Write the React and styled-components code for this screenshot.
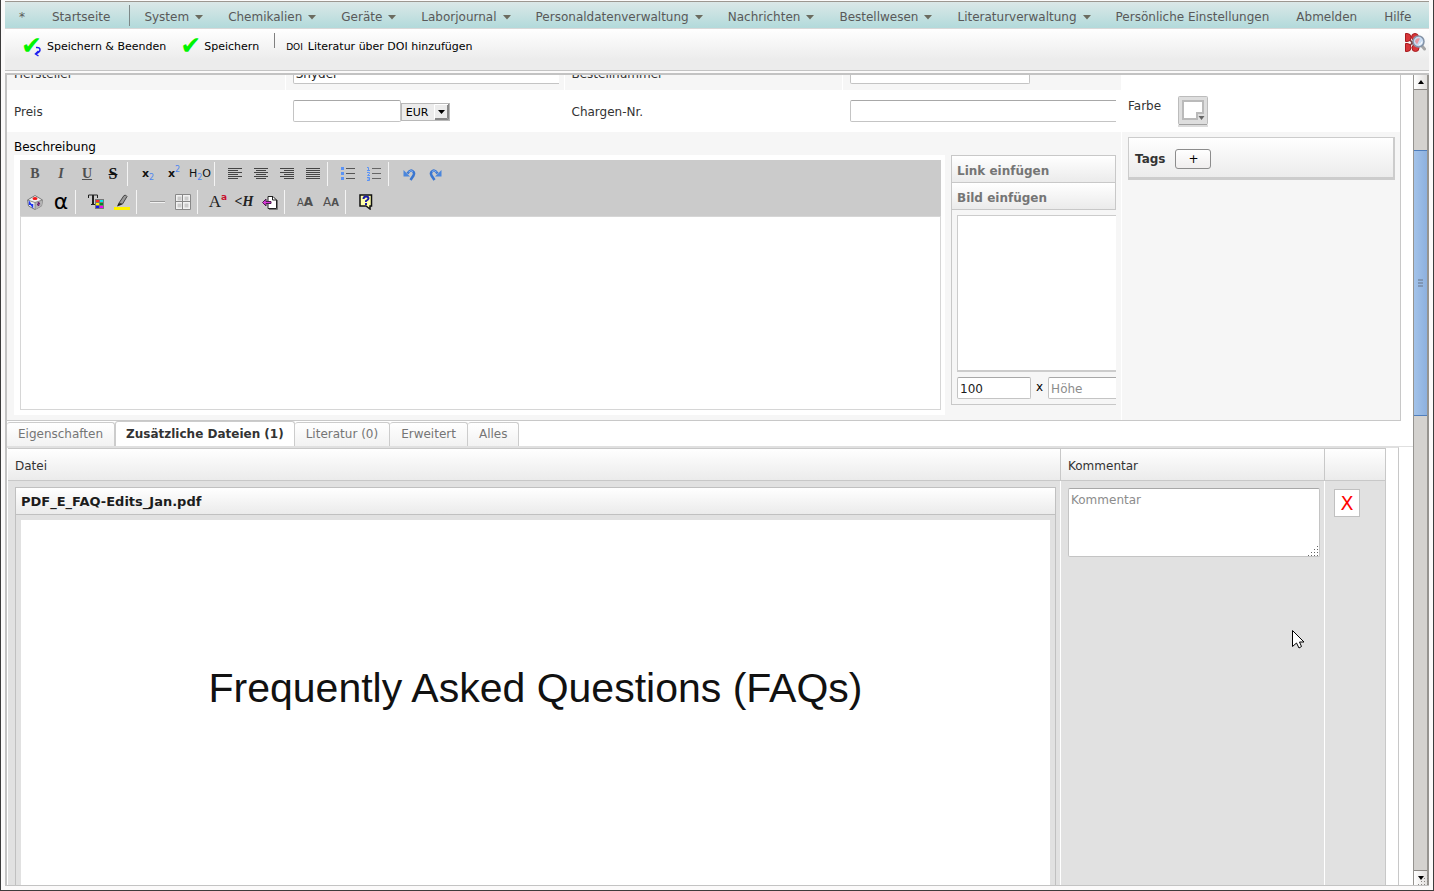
import { useState } from 'react';
import styled, { createGlobalStyle, css } from 'styled-components';

const GlobalStyle = createGlobalStyle`
    * {
        box-sizing: border-box;
    }

    body {
        margin: 0;
        font-family: 'DejaVu Sans', sans-serif;
        font-size: 12px;
        color: #333333;
        background: #fbfafa;
    }

    button, input, select, textarea {
        font-family: inherit;
        font-size: 12px;
    }
`;

const panelGradient = 'linear-gradient(#ffffff, #ebebeb)';

const Window = styled.div`
    position: relative;
    display: flex;
    flex-direction: column;
    height: 100vh;
    padding: 0 4px;
    overflow: hidden;
    border: solid #3c3c3c;
    border-width: 0 1px 1px 1px;
    background: #fbfafa;
`;

const NavBar = styled.nav`
    display: flex;
    flex: none;
    height: 28px;
    margin-top: 1px;
    padding-top: 1px;
    align-items: center;
    border-top: 1px solid #9c9790;
    border-bottom: 1px solid #d8d8d8;
    background: linear-gradient(#dbe8e8, #b2dadb);
`;

const NavItem = styled.a`
    display: flex;
    align-items: center;
    padding: 2px ${({ $menu }) => ($menu ? 11 : 13)}px 0 14px;
    line-height: 16px;
    white-space: nowrap;
    text-decoration: none;
    color: #595959;
`;

const NavArrow = styled.svg`
    margin: 2px 0 0 6px;
`;

const NavSeparator = styled.span`
    width: 1px;
    height: 21px;
    margin-left: 6px;
    background: #7d8888;
`;

const ActionBar = styled.div`
    display: flex;
    flex: none;
    height: 42px;
    padding: 4px 3px 0 17px;
    align-items: flex-start;
    border-bottom: 1px solid #c4c4c4;
    background: linear-gradient(#ffffff, #ececec 75%);
`;

const ActionButton = styled.button`
    display: flex;
    height: 26px;
    align-items: center;
    gap: 5px;
    margin-right: 15px;
    padding: 0;
    border: none;
    background: none;
    font-size: 11px;
    color: #000000;
`;

const CheckMark = styled.span`
    position: relative;
    width: ${({ $wide }) => ($wide ? 20 : 18)}px;
    font-size: 25px;
    line-height: 24px;
    text-indent: -1px;
    color: #00f400;

    svg {
        position: absolute;
        right: 0;
        bottom: 1px;
    }
`;

const DoiMark = styled.span`
    margin-top: 2px;
    font-size: 9px;
    line-height: 12px;
`;

const ActionSeparator = styled.span`
    width: 1px;
    height: 15px;
    margin-right: 11px;
    background: #808080;
`;

const SearchButton = styled.button`
    margin-left: auto;
    padding: 0;
    border: none;
    background: none;
`;

const Body = styled.div`
    display: flex;
    flex: 1;
    min-height: 0;
    margin-top: 2px;
    margin-bottom: 4px;
    border: solid #c3c3c3;
    border-width: 2px 0 1px 2px;
`;

const ScrollArea = styled.main`
    flex: 1;
    min-width: 0;
    overflow: hidden;
    background: #ffffff;
`;

const ScrollContent = styled.div`
    margin-top: -24px;
`;

const FormGrid = styled.div`
    display: grid;
    grid-template-columns: repeat(4, minmax(0, 1fr)) 278px;
    margin-right: 12px;
    border-right: 1px solid #c8c8c8;
    border-bottom: 1px solid #c8c8c8;
`;

const Cell = styled.div`
    display: flex;
    align-items: center;
    min-width: 0;
    padding: ${({ $shaded }) => ($shaded ? '11px 5px 6px 7px' : '10px 5px 10px 7px')};
    background: ${({ $shaded }) => ($shaded ? '#f6f6f6' : '#ffffff')};
    border-right: 1px solid #ffffff;
`;

const FieldLabel = styled.label`
    padding-top: 2px;
    line-height: 16px;
`;

const Clip = styled.div`
    display: flex;
    flex: 1;
    min-width: 0;
    align-items: center;
    overflow: hidden;
`;

const inputStyle = css`
    border: 1px solid #c4c4c4;
    border-top-color: #a8a8a8;
    border-radius: 2px;
    background: #ffffff;
    color: #1c1c1c;

    &::placeholder {
        color: #8c8c8c;
    }
`;

const TextInput = styled.input`
    ${inputStyle}
    flex: none;
    width: ${({ $width }) => $width};
    height: 22px;
    padding: 2px 2px 0;
`;

const SelectWrap = styled.div`
    position: relative;
    display: flex;
    padding-top: 2px;

    svg {
        position: absolute;
        top: 3px;
        right: 1px;
        pointer-events: none;
    }
`;

const Select = styled.select`
    appearance: none;
    width: 49px;
    height: 18px;
    padding: 0 4px;
    border: 1px solid #b8b8b8;
    border-radius: 0;
    background: #ececec;
    font-size: 11px;
    color: #000000;
`;

const ColorCell = styled(Cell)`
    align-items: flex-start;
    gap: 17px;
    padding: 5px 6px 0;
    border: none;
    line-height: 22px;
`;

const ColorButton = styled.button`
    height: 32px;
    padding: 0;
    border: none;
    background: none;
`;

const DescriptionCell = styled.section`
    grid-column: span 4;
    min-width: 0;
    padding: 7px 5px 5px 7px;
    border-right: 1px solid #ffffff;
    background: #f6f6f6;
`;

const DescriptionTitle = styled.div`
    line-height: 16px;
    color: #000000;
`;

const DescriptionRow = styled.div`
    display: flex;
    align-items: flex-start;
    gap: 6px;
`;

const Editor = styled.div`
    flex: 1;
    min-width: 0;
    padding: 5px 4px 5px 6px;
    background: #ffffff;
`;

const EditorToolbar = styled.div`
    padding: 0 2px;
    background: #cbcbcb;
`;

const ToolRow = styled.div`
    display: flex;
    height: 28px;
    align-items: center;
`;

const ToolSeparator = styled.span`
    width: 1px;
    height: 24px;
    margin: 0 7px 0 1px;
    background: #f4f4f4;
`;

const ToolButton = styled.button`
    display: flex;
    flex: none;
    width: 26px;
    height: 24px;
    align-items: center;
    justify-content: center;
    padding: 0;
    border: none;
    background: none;
`;

const Glyph = styled.span`
    font-family: ${({ $sans }) => ($sans ? "'DejaVu Sans', sans-serif" : "'Liberation Serif', serif")};
    font-size: ${({ $size }) => $size || 14}px;
    font-weight: ${({ $bold }) => ($bold ? 700 : 400)};
    font-style: ${({ $italic }) => ($italic ? 'italic' : 'normal')};
    text-decoration: ${({ $line }) => $line || 'none'};
    line-height: 18px;
    white-space: nowrap;
    color: ${({ $color }) => $color || '#505050'};

    sub, sup {
        font-family: 'DejaVu Sans', sans-serif;
        font-size: 8px;
        font-weight: 400;
        line-height: 0;
        color: #4d86f0;
    }
`;

const RedSup = styled.sup`
    && {
        font-size: 9px;
        font-weight: 700;
        color: #c8102e;
    }
`;

const EditorText = styled.textarea`
    display: block;
    width: 100%;
    height: 194px;
    resize: none;
    border: 1px solid #d6d6d6;
    border-radius: 0;
    outline: none;
    background: #ffffff;
`;

const InsertPanel = styled.aside`
    width: 165px;
    flex: none;
    overflow: hidden;
    border: solid #c8c8c8;
    border-width: 1px 0 1px 1px;
`;

const InsertButton = styled.button`
    display: block;
    width: 100%;
    height: 27px;
    padding: 3px 5px 0;
    border: solid #c8c8c8;
    border-width: 0 1px 1px 0;
    background: ${panelGradient};
    font-weight: 700;
    text-align: left;
    color: #757575;
`;

const ImageBox = styled.div`
    height: 157px;
    margin: 5px 0 5px 5px;
    border: solid #cccccc;
    border-width: 1px 0 2px 1px;
    background: #ffffff;
`;

const SizeRow = styled.div`
    display: flex;
    gap: 5px;
    padding: 0 0 5px 5px;
    line-height: 20px;
    color: #000000;
`;

const TagCell = styled.div`
    padding: 5px 5px 0 6px;
    background: #f6f6f6;
`;

const TagBox = styled.div`
    display: flex;
    height: 43px;
    padding: 2px 0 0 6px;
    align-items: center;
    gap: 10px;
    border: solid #cccccc;
    border-width: 1px 2px 3px 1px;
    background: ${panelGradient};
    font-weight: 700;
`;

const AddButton = styled.button`
    width: 36px;
    height: 20px;
    padding: 0;
    border: 1px solid #8c8c8c;
    border-radius: 3px;
    background: linear-gradient(#ffffff, #f0eeee);
    color: #000000;
`;

const TabBar = styled.div`
    display: flex;
    height: 25px;
    align-items: flex-end;
`;

const Tab = styled.button`
    height: ${({ $active }) => ($active ? 25 : 24)}px;
    padding: 0 ${({ $active }) => ($active ? 10 : 11)}px 1px;
    border: 1px solid #cccccc;
    border-left-width: ${({ $active }) => ($active ? 1 : 0)}px;
    border-bottom: none;
    border-radius: 3px 3px 0 0;
    background: ${({ $active }) => ($active ? '#ffffff' : 'linear-gradient(#ffffff, #f2f2f2)')};
    font-weight: ${({ $active }) => ($active ? 700 : 400)};
    color: ${({ $active }) => ($active ? '#333333' : '#757575')};
`;

const FileSection = styled.section`
    border-top: 1px solid #e0e0e0;
`;

const FilePanel = styled.div`
    margin-right: 14px;
    padding: 0 12px 0 1px;
    border-top: 1px solid #e0e0e0;
    border-right: 1px solid #c8c8c8;
`;

const FileTable = styled.table`
    width: 100%;
    table-layout: fixed;
    border-collapse: separate;
    border-spacing: 0;
    border-right: 1px solid #c8c8c8;
    background: #e1e1e1;
`;

const HeadCell = styled.th`
    width: ${({ $width }) => $width || 'auto'};
    height: 33px;
    padding: 2px 7px 0;
    border: solid #c8c8c8;
    border-width: 1px 1px 1px 0;
    background: ${panelGradient};
    font-weight: 400;
    text-align: left;

    &:last-child {
        border-right: none;
    }
`;

const DataCell = styled.td`
    height: 500px;
    padding: 6px 4px 0 7px;
    vertical-align: top;
    border-right: 1px solid #ffffff;

    &:last-child {
        border-right: none;
    }
`;

const FileBox = styled.div`
    height: 100%;
    border: 1px solid #c0c0c0;
`;

const FileName = styled.div`
    height: 27px;
    padding: 1px 5px 0;
    line-height: 26px;
    border-bottom: 1px solid #c0c0c0;
    background: ${panelGradient};
    font-size: 13px;
    font-weight: 700;
    color: #1c1c1c;
`;

const Preview = styled.div`
    height: 460px;
    margin: 5px 5px 0;
    padding-top: 144px;
    background: #ffffff;
    font-family: 'Liberation Sans', sans-serif;
    font-size: 41px;
    line-height: 48px;
    text-align: center;
    white-space: nowrap;
    color: #111111;
`;

const CommentWrap = styled.div`
    position: relative;

    svg {
        position: absolute;
        right: 1px;
        bottom: 1px;
    }
`;

const CommentArea = styled.textarea`
    ${inputStyle}
    display: block;
    width: 100%;
    height: 69px;
    margin-top: 1px;
    padding: 4px 2px;
    resize: none;
`;

const DeleteButton = styled.button`
    width: 26px;
    height: 28px;
    margin: 2px;
    padding: 0;
    border: 1px solid #c0c0c0;
    background: #ffffff;
    font-size: 19px;
    line-height: 24px;
    color: #ff0000;
`;

const ScrollBar = styled.div`
    display: flex;
    flex: none;
    flex-direction: column;
    width: 16px;
    border: solid #969490;
    border-width: 0 2px 0 1px;
    background: #d4d2cf;
`;

const ScrollButton = styled.button`
    display: flex;
    height: 15px;
    align-items: center;
    justify-content: center;
    padding: 0;
    border: solid #8a8783;
    border-width: ${({ $down }) => ($down ? '1px 0 0' : '0 0 1px')};
    background: linear-gradient(90deg, #ffffff, #e2e0de);
`;

const ScrollTrack = styled.div`
    flex: 1;
    padding-top: 60px;
`;

const ScrollThumb = styled.div`
    display: flex;
    height: 37%;
    align-items: center;
    justify-content: center;
    border: solid #4f7ebc;
    border-width: 1px 0;
    background: linear-gradient(90deg, #a3c3ea, #8db0de);
`;

const ResizeGrip = styled.svg`
    position: absolute;
    right: 4px;
    bottom: 5px;
`;

const Pointer = styled.svg`
    position: absolute;
    left: 1291px;
    top: 629px;
    pointer-events: none;
`;

const navItems = [
    { label: 'System', menu: true },
    { label: 'Chemikalien', menu: true },
    { label: 'Geräte', menu: true },
    { label: 'Laborjournal', menu: true },
    { label: 'Personaldatenverwaltung', menu: true },
    { label: 'Nachrichten', menu: true },
    { label: 'Bestellwesen', menu: true },
    { label: 'Literaturverwaltung', menu: true },
    { label: 'Persönliche Einstellungen' },
    { label: 'Abmelden' },
    { label: 'Hilfe' },
];

const tabs = ['Eigenschaften', 'Zusätzliche Dateien (1)', 'Literatur (0)', 'Erweitert', 'Alles'];

const CheckIcon = ({ arrow }) => (
    <CheckMark $wide={arrow} aria-hidden="true">
        ✔
        {arrow && (
            <svg width="8" height="11" viewBox="0 0 8 11">
                <path d="M2 1.500q4-.5 4 2.500q0 2-3.500 3.500M4.500 5L1.500 8l3 2" fill="none" stroke="#1d1df0" strokeWidth="1.500" />
            </svg>
        )}
    </CheckMark>
);

const MoleculeIcon = () => (
    <svg width="21" height="20" viewBox="0 0 21 20">
        <path d="M3 4l8 11M12 4L3 15" stroke="#7d3c3c" strokeWidth="1.500" />
        <g fill="#d8363a" stroke="#a81c20">
            <path d="M.5.500h1.500a3.500 3.500 0 0 1 0 8H.500zM.5 10.500h1.500a4 4 0 0 1 0 8H.500z" />
            <circle cx="10" cy="4" r="3.500" />
            <circle cx="10.500" cy="15" r="3.500" />
        </g>
        <path d="M17 13l2.500 3" stroke="#a5a5a5" strokeWidth="3" strokeLinecap="round" />
        <circle cx="13.500" cy="8.500" r="5.500" fill="#c9dcf2" stroke="#8493a6" strokeWidth="1.500" />
        <path d="M10 8.500a3.500 3.500 0 0 1 5-3l-3 6z" fill="#e79aa2" />
        <path d="M14 11.500a3 3 0 0 0 3-3" stroke="#ffffff" fill="none" />
    </svg>
);

const SwatchIcon = () => (
    <svg width="30" height="32" viewBox="0 0 30 32">
        <path d="M0 31h30" stroke="#dcdcdc" strokeWidth="2" />
        <rect x=".5" y="1.500" width="29" height="28" rx="1" fill="#dedede" stroke="#bcbcbc" />
        <path d="M1 29.500h28" stroke="#a0a0a0" />
        <path d="M5 6h20v12h-6v6H5z" fill="#ffffff" stroke="#bababa" strokeWidth="2" />
        <path d="M20.500 21h6l-3 4z" fill="#666666" />
    </svg>
);

// one hairline every second pixel, short lines alternate with full ones
const AlignIcon = ({ align }) => (
    <svg width="14" height="12" viewBox="0 0 14 12" fill="#444444">
        {[0, 1, 2, 3, 4, 5].map((row) => {
            const width = align === 'justify' || row % 2 === 0 ? 14 : 10;
            const x = { left: 0, justify: 0, center: (14 - width) / 2, right: 14 - width }[align];
            return <rect key={row} x={x} y={row * 2} width={width} height="1" />;
        })}
    </svg>
);

const BulletIcon = () => (
    <svg width="14" height="14" viewBox="0 0 14 14">
        <path d="M0 0h3v3H0zM0 5h3v3H0zM0 10h3v3H0z" fill="#5b93f5" />
        <path d="M5 1.500h9M5 6.500h9M5 11.500h9" stroke="#555555" />
    </svg>
);

const NumberIcon = () => (
    <svg width="14" height="14" viewBox="0 0 14 14">
        <path d="M0 .5h1.500v3M0 3.500h3M0 5.500h2.500v1L.500 8.500h2.500M0 10.500h2.500v3H0M.5 12h2" fill="none" stroke="#5b93f5" />
        <path d="M5 1.500h9M5 6.500h9M5 11.500h9" stroke="#666666" />
    </svg>
);

const UndoIcon = ({ redo }) => (
    <svg width="13" height="13" viewBox="0 0 13 13">
        <g transform={redo ? 'translate(13 0) scale(-1 1)' : undefined}>
            <path d="M4.500 5.500Q7 1.500 9.500 3T10.500 7.500L7.500 12" fill="none" stroke="#3a76d0" strokeWidth="2.500" />
            <path d="M5.500 4Q8 1.500 10 3.500" fill="none" stroke="#86b0f0" />
            <path d="M.5 2v6.500H7z" fill="#4a86dc" />
        </g>
    </svg>
);

const CubeIcon = () => (
    <svg width="16" height="15" viewBox="0 0 16 15">
        <path d="M.5 5L8 .5 15.500 5l-1 6L8 14.500 1.500 11z" fill="#f0f0f0" stroke="#777777" />
        <path d="M8 7.500l7.500-2.500-1 6L8 14.500z" fill="#b4b4b4" />
        <path d="M.5 5L8 7.500 15.500 5M8 7.500v7" fill="none" stroke="#888888" />
        <ellipse cx="8" cy="3.500" rx="2.500" ry="1.500" fill="#f01818" />
        <path d="M2.500 10V7.500l3 4V9" fill="none" stroke="#1d35f0" strokeWidth="1.500" />
        <path d="M10 9.500l3-1M11.500 7v4" stroke="#6c2173" strokeWidth="1.500" />
    </svg>
);

const TextColorIcon = () => (
    <svg width="16" height="16" viewBox="0 0 16 16">
        <path d="M.5 4V1h9v3M3 10.500h4" fill="none" stroke="#222222" />
        <path d="M5 1v9" stroke="#222222" strokeWidth="2" />
        <path d="M7 5h9v10H7z" fill="#777777" />
        <path d="M8 6h3v2H8z" fill="#ff2a2a" />
        <path d="M12 6h3v2h-3z" fill="#00e8e8" />
        <path d="M8 9h3v2H8z" fill="#ffee00" />
        <path d="M12 9h3v2h-3z" fill="#008a20" />
        <path d="M8 12h3v2H8z" fill="#1414f0" />
        <path d="M12 12h3v2h-3z" fill="#f000f0" />
    </svg>
);

const MarkerIcon = () => (
    <svg width="16" height="16" viewBox="0 0 16 16">
        <path d="M5 9l5-7.500q2-1 3 1L8.500 10z" fill="#999999" stroke="#444444" />
        <path d="M4.500 9l4 1.500-5.500 2z" fill="#222222" />
        <path d="M0 13h16v3H0z" fill="#fff200" />
    </svg>
);

const RuleIcon = () => (
    <svg width="15" height="3" viewBox="0 0 15 3">
        <path d="M0 .5h15" stroke="#999999" />
        <path d="M0 1.500h15" stroke="#f2f2f2" />
    </svg>
);

const TableIcon = () => (
    <svg width="16" height="16" viewBox="0 0 16 16">
        <path d="M.5.500h15v15H.500z" fill="#f2f2f2" stroke="#888888" />
        <path d="M2.500 2.500h4v4h-4zM9.500 2.500h4v4h-4zM2.500 9.500h4v4h-4zM9.500 9.500h4v4h-4z" fill="#cbcbcb" />
        <path d="M7.500 1v14M1 7.500h14" stroke="#888888" />
    </svg>
);

const PageIcon = () => (
    <svg width="16" height="15" viewBox="0 0 16 15">
        <path d="M6 1.500h5l3.500 3.500v8.500H6z" fill="#ffffff" stroke="#222222" />
        <path d="M15.500 5v9.500H7" fill="none" stroke="#777777" />
        <path d="M10.500 1.500V5h4" fill="none" stroke="#222222" />
        <path d="M.5 7.500l3.500-3.500v2.500h5v2H4V11z" fill="#d839d8" stroke="#4b1a4b" />
    </svg>
);

const HelpIcon = () => (
    <svg width="14" height="16" viewBox="0 0 14 16">
        <path d="M1 1h11.500v11H11v3l-4-3H1z" fill="#ffffa8" stroke="#111111" strokeWidth="1.500" />
        <path d="M4.500 5q0-2.500 2.500-2.500t2.500 2q0 1-2.500 2.500v1M7 9v2" fill="none" stroke="#1a1aa8" strokeWidth="2" />
    </svg>
);

const CursorIcon = () => (
    <Pointer width="14" height="22" viewBox="0 0 14 22">
        <path d="M1.500 1.500v16l4-3.500 2.500 5 2.500-1.500-2-4.500h4.500z" fill="#ffffff" stroke="#000000" />
    </Pointer>
);

const gripPath =
    'M10 1h1v1h-1zM10 4h1v1h-1zM10 7h1v1h-1zM10 10h1v1h-1zM7 4h1v1H7zM7 7h1v1H7zM7 10h1v1H7zM4 7h1v1H4zM4 10h1v1H4zM1 10h1v1H1z';

const GripDots = () => (
    <svg width="12" height="11" viewBox="0 0 12 11" fill="#666666">
        <path d={gripPath} />
    </svg>
);

const toolRows = [
    [
        [
            ['Fett', <Glyph $bold>B</Glyph>],
            ['Kursiv', <Glyph $bold $italic>I</Glyph>],
            ['Unterstrichen', <Glyph $bold $line="underline">U</Glyph>],
            ['Durchgestrichen', <Glyph $bold $size={16} $line="line-through" $color="#111111">S</Glyph>],
        ],
        [
            ['Tiefgestellt', <Glyph $sans $bold $size={11} $color="#111111">x<sub>2</sub></Glyph>],
            ['Hochgestellt', <Glyph $sans $bold $size={11} $color="#111111">x<sup>2</sup></Glyph>],
            ['Formel', <Glyph $sans $size={11} $color="#111111">H<sub>2</sub>O</Glyph>],
        ],
        [
            ['Linksbündig', <AlignIcon align="left" />],
            ['Zentriert', <AlignIcon align="center" />],
            ['Rechtsbündig', <AlignIcon align="right" />],
            ['Blocksatz', <AlignIcon align="justify" />],
        ],
        [
            ['Aufzählung', <BulletIcon />],
            ['Nummerierung', <NumberIcon />],
        ],
        [
            ['Rückgängig', <UndoIcon />],
            ['Wiederholen', <UndoIcon redo />],
        ],
    ],
    [
        [
            ['Objekt', <CubeIcon />],
            ['Sonderzeichen', <Glyph $sans $size={22} $color="#000000">α</Glyph>],
        ],
        [
            ['Textfarbe', <TextColorIcon />],
            ['Hervorheben', <MarkerIcon />],
        ],
        [
            ['Linie', <RuleIcon />],
            ['Tabelle', <TableIcon />],
        ],
        [
            ['Schriftart', <Glyph $size={17} $color="#222222">A<RedSup>a</RedSup></Glyph>],
            ['Überschrift', <Glyph $bold $italic $color="#222222">&lt;H</Glyph>],
            ['Seite einfügen', <PageIcon />],
        ],
        [
            ['Größer', <Glyph $sans $size={10}>A<Glyph $sans $bold $size={12}>A</Glyph></Glyph>],
            ['Kleiner', <Glyph $sans $size={12}>A<Glyph $sans $bold $size={10}>A</Glyph></Glyph>],
        ],
        [['Hilfe', <HelpIcon />]],
    ],
];

const ToolGroup = ({ tools, first }) => (
    <>
        {!first && <ToolSeparator />}
        {tools.map(([label, icon]) => (
            <ToolButton key={label} type="button" aria-label={label}>
                {icon}
            </ToolButton>
        ))}
    </>
);

const Navigation = () => (
    <NavBar>
        <NavItem href="#">*</NavItem>
        <NavItem href="#">Startseite</NavItem>
        <NavSeparator />
        {navItems.map(({ label, menu }) => (
            <NavItem key={label} href="#" $menu={menu}>
                {label}
                {menu && (
                    <NavArrow width="8" height="5" viewBox="0 0 8 5">
                        <path d="M0 0h8L4 4.500z" fill="#6b6b5f" />
                    </NavArrow>
                )}
            </NavItem>
        ))}
    </NavBar>
);

const Description = () => (
    <DescriptionCell>
        <DescriptionTitle>Beschreibung</DescriptionTitle>
        <DescriptionRow>
            <Editor>
                <EditorToolbar>
                    {toolRows.map((groups, row) => (
                        <ToolRow key={row}>
                            {groups.map((tools, idx) => (
                                <ToolGroup key={idx} tools={tools} first={idx === 0} />
                            ))}
                        </ToolRow>
                    ))}
                </EditorToolbar>
                <EditorText aria-label="Beschreibung" />
            </Editor>
            <InsertPanel>
                <InsertButton type="button">Link einfügen</InsertButton>
                <InsertButton type="button">Bild einfügen</InsertButton>
                <ImageBox />
                <SizeRow>
                    <TextInput $width="74px" aria-label="Breite" defaultValue="100" />
                    x
                    <TextInput $width="74px" aria-label="Höhe" placeholder="Höhe" />
                </SizeRow>
            </InsertPanel>
        </DescriptionRow>
    </DescriptionCell>
);

const Form = () => (
    <FormGrid>
        <Cell $shaded>
            <FieldLabel htmlFor="producer">Hersteller</FieldLabel>
        </Cell>
        <Cell $shaded>
            <Clip>
                <TextInput id="producer" $width="110%" defaultValue="Snyder" />
            </Clip>
        </Cell>
        <Cell $shaded>
            <FieldLabel htmlFor="orderNumber">Bestellnummer</FieldLabel>
        </Cell>
        <Cell $shaded>
            <TextInput id="orderNumber" $width="180px" />
        </Cell>
        <Cell />
        <Cell>
            <FieldLabel htmlFor="price">Preis</FieldLabel>
        </Cell>
        <Cell>
            <TextInput id="price" $width="108px" />
            <SelectWrap>
                <Select aria-label="Währung">
                    <option>EUR</option>
                </Select>
                <svg width="15" height="16" viewBox="0 0 15 16">
                    <path d="M0 0h15v16H0z" fill="#ececec" />
                    <path d="M1 15.500h13.500V0M1 14.500h12.500V1" fill="none" stroke="#888888" />
                    <path d="M.5 15V.5H14" fill="none" stroke="#ffffff" />
                    <path d="M4 6h7l-3.500 4z" fill="#000000" />
                </svg>
            </SelectWrap>
        </Cell>
        <Cell>
            <FieldLabel htmlFor="batch">Chargen-Nr.</FieldLabel>
        </Cell>
        <Cell>
            <Clip>
                <TextInput id="batch" $width="110%" />
            </Clip>
        </Cell>
        <ColorCell>
            Farbe
            <ColorButton type="button" aria-label="Farbe">
                <SwatchIcon />
            </ColorButton>
        </ColorCell>
        <Description />
        <TagCell>
            <TagBox>
                Tags
                <AddButton type="button">+</AddButton>
            </TagBox>
        </TagCell>
    </FormGrid>
);

const Files = () => (
    <FileSection>
        <FilePanel>
            <FileTable>
                <thead>
                    <tr>
                        <HeadCell>Datei</HeadCell>
                        <HeadCell $width="264px">Kommentar</HeadCell>
                        <HeadCell $width="60px" />
                    </tr>
                </thead>
                <tbody>
                    <tr>
                        <DataCell>
                            <FileBox>
                                <FileName>PDF_E_FAQ-Edits_Jan.pdf</FileName>
                                <Preview>Frequently Asked Questions (FAQs)</Preview>
                            </FileBox>
                        </DataCell>
                        <DataCell>
                            <CommentWrap>
                                <CommentArea aria-label="Kommentar" placeholder="Kommentar" />
                                <GripDots />
                            </CommentWrap>
                        </DataCell>
                        <DataCell>
                            <DeleteButton type="button" aria-label="Datei löschen">
                                X
                            </DeleteButton>
                        </DataCell>
                    </tr>
                </tbody>
            </FileTable>
        </FilePanel>
    </FileSection>
);

const App = () => {
    const [activeTab, setActiveTab] = useState(1);

    return (
        <>
            <GlobalStyle />
            <Window>
                <Navigation />
                <ActionBar>
                    <ActionButton type="button">
                        <CheckIcon arrow />
                        Speichern &amp; Beenden
                    </ActionButton>
                    <ActionButton type="button">
                        <CheckIcon />
                        Speichern
                    </ActionButton>
                    <ActionSeparator />
                    <ActionButton type="button">
                        <DoiMark>DOI</DoiMark>
                        Literatur über DOI hinzufügen
                    </ActionButton>
                    <SearchButton type="button" aria-label="Struktursuche">
                        <MoleculeIcon />
                    </SearchButton>
                </ActionBar>
                <Body>
                    <ScrollArea>
                        <ScrollContent>
                            <Form />
                            <TabBar>
                                {tabs.map((label, idx) => (
                                    <Tab
                                        key={label}
                                        type="button"
                                        $active={idx === activeTab}
                                        onClick={() => setActiveTab(idx)}
                                    >
                                        {label}
                                    </Tab>
                                ))}
                            </TabBar>
                            <Files />
                        </ScrollContent>
                    </ScrollArea>
                    <ScrollBar>
                        <ScrollButton type="button" aria-label="Nach oben">
                            <svg width="6" height="4" viewBox="0 0 6 4">
                                <path d="M0 4h6L3 0z" />
                            </svg>
                        </ScrollButton>
                        <ScrollTrack>
                            <ScrollThumb>
                                <svg width="5" height="8" viewBox="0 0 5 8">
                                    <path d="M0 1h5M0 4h5M0 7h5" stroke="#7f96b5" strokeWidth="2" />
                                </svg>
                            </ScrollThumb>
                        </ScrollTrack>
                        <ScrollButton type="button" aria-label="Nach unten" $down>
                            <svg width="6" height="4" viewBox="0 0 6 4">
                                <path d="M0 0h6L3 4z" />
                            </svg>
                        </ScrollButton>
                    </ScrollBar>
                </Body>
                <ResizeGrip width="12" height="11" viewBox="0 0 12 11" fill="#8a8783">
                    <path d={gripPath} />
                </ResizeGrip>
            </Window>
            <CursorIcon />
        </>
    );
};

export default App;
